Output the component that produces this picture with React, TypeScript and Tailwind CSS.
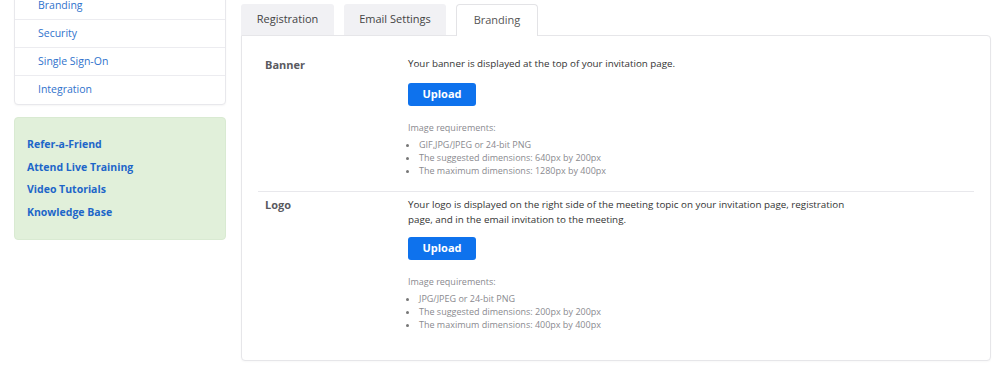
export default function App() {
  const navItems = ["Branding", "Security", "Single Sign-On", "Integration"];
  const helpLinks = ["Refer-a-Friend", "Attend Live Training", "Video Tutorials", "Knowledge Base"];
  const tabs = [
    { label: "Registration", width: "w-[93px]" },
    { label: "Email Settings", width: "w-[102px]" },
    { label: "Branding", width: "w-[82px]" },
  ];

  return (
    <div className="flex h-[376px] w-[1000px] overflow-hidden bg-white pl-[14px] font-['Open_Sans',sans-serif]">
      {/* Sidebar */}
      <div className="flex w-[212px] shrink-0 flex-col">
        <div className="-mt-[9px] rounded-b-[4px] border border-[#e8e8ec] bg-white shadow-[0_1px_2px_rgba(0,0,0,0.04)]">
          {navItems.map((item, i) => (
            <div
              key={item}
              className={`flex h-[28px] items-center pl-[23px] text-[10.5px] text-[#3072cc] ${
                i < navItems.length - 1 ? "border-b border-[#ececf0]" : ""
              }`}
            >
              {item}
            </div>
          ))}
        </div>

        <div className="mt-[12px] flex h-[123px] flex-col rounded-[4px] border border-[#d9ead2] bg-[#e1f0da] pl-[12px] pt-[15px]">
          {helpLinks.map((link) => (
            <a key={link} className="h-[22.5px] text-[10.5px] font-bold leading-[22.5px] text-[#1d66c9]">
              {link}
            </a>
          ))}
        </div>
      </div>

      {/* Main */}
      <div className="ml-[15px] mt-[4px] flex w-[750px] flex-col">
        <div className="relative z-10 flex gap-[10px]">
          {tabs.map((tab) => {
            const active = tab.label === "Branding";
            return (
              <div
                key={tab.label}
                className={`${tab.width} ${
                  active
                    ? "-mb-px flex h-[32px] items-center justify-center rounded-t-[4px] border border-b-0 border-[#e3e3e6] bg-white text-[11px] text-[#555]"
                    : "flex h-[31px] items-center justify-center rounded-t-[3px] bg-[#f1f1f4] text-[11px] text-[#444]"
                }`}
              >
                {tab.label}
              </div>
            );
          })}
        </div>

        <div className="h-[326px] rounded-b-[4px] rounded-tr-[4px] border border-[#e6e6e9] bg-white px-[16px] shadow-[0_1px_2px_rgba(0,0,0,0.03)]">
          {/* Banner */}
          <div className="flex border-b border-[#e8e8ec] pb-[14px] pt-[20px]">
            <div className="w-[150px] shrink-0 pl-[7px] pt-[1px] text-[11px] font-bold leading-[15px] text-[#5a5a5f]">
              Banner
            </div>
            <div className="flex flex-col">
              <p className="text-[9.8px] leading-[15px] text-[#333]">
                Your banner is displayed at the top of your invitation page.
              </p>
              <button className="mt-[12px] h-[23px] w-[68px] rounded-[3px] bg-[#0e72ed] text-[11px] font-bold text-white">
                Upload
              </button>
              <p className="mt-[15px] text-[9px] leading-[13px] text-[#8a8a8f]">Image requirements:</p>
              <ul className="mt-[4px] list-disc pl-[11px] text-[9px] leading-[13px] text-[#8a8a8f] marker:text-[#777]">
                <li>GIF,JPG/JPEG or 24-bit PNG</li>
                <li>The suggested dimensions: 640px by 200px</li>
                <li>The maximum dimensions: 1280px by 400px</li>
              </ul>
            </div>
          </div>

          {/* Logo */}
          <div className="flex pt-[5px]">
            <div className="w-[150px] shrink-0 pl-[7px] text-[11px] font-bold leading-[15px] text-[#5a5a5f]">
              Logo
            </div>
            <div className="flex flex-col">
              <p className="w-[460px] text-[9.8px] leading-[15px] text-[#333]">
                Your logo is displayed on the right side of the meeting topic on your invitation page, registration
                page, and in the email invitation to the meeting.
              </p>
              <button className="mt-[10px] h-[23px] w-[68px] rounded-[3px] bg-[#0e72ed] text-[11px] font-bold text-white">
                Upload
              </button>
              <p className="mt-[15px] text-[9px] leading-[13px] text-[#8a8a8f]">Image requirements:</p>
              <ul className="mt-[4px] list-disc pl-[11px] text-[9px] leading-[13px] text-[#8a8a8f] marker:text-[#777]">
                <li>JPG/JPEG or 24-bit PNG</li>
                <li>The suggested dimensions: 200px by 200px</li>
                <li>The maximum dimensions: 400px by 400px</li>
              </ul>
            </div>
          </div>
        </div>
      </div>
    </div>
  );
}
